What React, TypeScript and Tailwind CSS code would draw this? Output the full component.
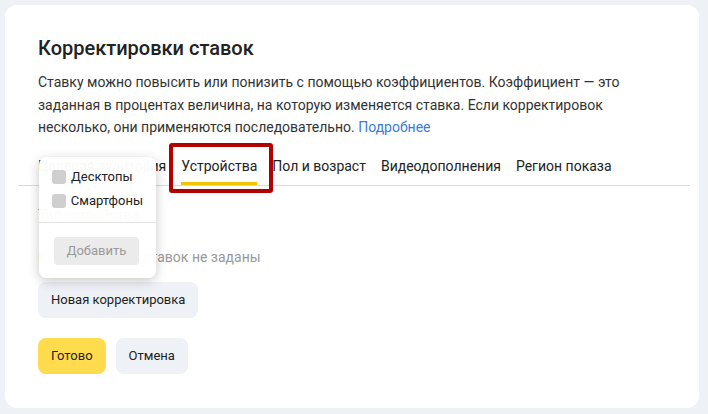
import { useState } from 'react';

const TABS = ['Целевая аудитория', 'Устройства', 'Пол и возраст', 'Видеодополнения', 'Регион показа'];

function Checkbox({ label }: { label: string }) {
  return (
    <label className="flex items-center gap-[5px] h-6 cursor-pointer">
      <span className="w-[14px] h-[14px] rounded-[3px] bg-[#cfcfcf]" />
      <span className="text-[13px] text-[#222]">{label}</span>
    </label>
  );
}

function DevicePopup() {
  return (
    <div className="absolute left-[21px] top-[12px] w-[117px] bg-white/[0.97] rounded-[8px] shadow-[0_3px_12px_rgba(0,0,0,0.22)] z-10">
      <div className="px-[13px] pt-[8px] pb-[9px] flex flex-col">
        <Checkbox label="Десктопы" />
        <Checkbox label="Смартфоны" />
      </div>
      <div className="border-t border-[#e3e3e3]" />
      <div className="px-[15px] pt-[14px] pb-[13px]">
        <button disabled className="w-[85px] h-[28px] rounded-[4px] bg-[#ebebeb] text-[13px] text-[#9a9a9a]">
          Добавить
        </button>
      </div>
    </div>
  );
}

export default function App() {
  const [active] = useState(1);

  return (
    <div className="w-[708px] h-[414px] bg-[#eef1f5] p-[5px] font-['Roboto',sans-serif] text-[#222]">
      <div className="w-[694px] h-[403px] bg-white rounded-[12px] pt-[29px]">
        <div className="px-[33px]">
          <h1 className="text-[20px] leading-[28px] font-medium text-[#222]">Корректировки ставок</h1>
          <p className="mt-[9px] text-[14px] leading-[22.5px] text-[#333] w-[590px]">
            Ставку можно повысить или понизить с помощью коэффициентов. Коэффициент — это заданная в процентах величина, на которую изменяется ставка. Если корректировок несколько, они применяются последовательно.{' '}
            <a href="#" className="text-[#3b7bdb]">Подробнее</a>
          </p>
        </div>

        <div className="relative mt-[6px] ml-[13px] mr-[9px] border-b border-[#d9d9d9]">
          <div className="flex gap-[15px] pl-[20px] h-[40px] items-stretch">
            {TABS.map((t, i) => (
              <div key={t} className="relative flex items-center pt-[4px] text-[14px] text-[#222]">
                {t}
                {i === active && (
                  <span className="absolute left-0 right-0 bottom-0 h-[3px] bg-[#f2c500]" />
                )}
                {i === active && (
                  <span className="absolute left-[-12px] right-[-16px] top-[-2px] bottom-[-8px] border-[4px] border-[#b30000] rounded-[3px] pointer-events-none" />
                )}
              </div>
            ))}
          </div>
          <DevicePopup />
        </div>

        <div className="px-[33px]">
          <div className="pt-[17px] text-[14px] h-[24px] leading-[24px] text-[#c58a3c]">Тип устройства</div>
          <div className="mt-[35px] text-[14px] leading-[24px] text-[#999]">Корректировки ставок не заданы</div>
          <button className="mt-[13px] h-[36px] px-[13px] rounded-[8px] bg-[#eef1f5] text-[13px] text-[#222]">
            Новая корректировка
          </button>
          <div className="mt-[20px] flex gap-[10px]">
            <button className="h-[36px] px-[13px] rounded-[8px] bg-[#ffdb4d] text-[13px] text-[#222]">Готово</button>
            <button className="h-[36px] px-[13px] rounded-[8px] bg-[#eef1f5] text-[13px] text-[#222]">Отмена</button>
          </div>
        </div>
      </div>
    </div>
  );
}
